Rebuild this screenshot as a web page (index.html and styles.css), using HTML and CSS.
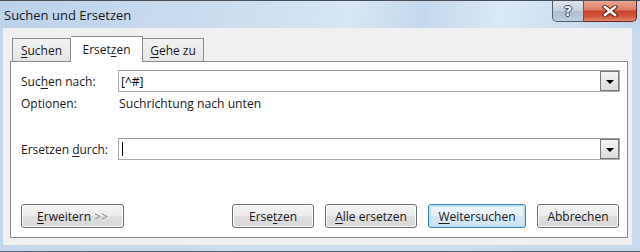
FILE: index.html
```html
<!DOCTYPE html>
<html lang="de">
<head>
    <meta charset="UTF-8">
    <meta name="viewport" content="width=device-width, initial-scale=1.0">
    <title>Suchen und Ersetzen</title>
    <link rel="stylesheet" href="styles.css">
</head>
<body>
    <div class="window">
        <div class="titlebar">
            <span class="title">Suchen und Ersetzen</span>
            <div class="caption-buttons">
                <div class="cap-btn help">?</div>
                <div class="cap-btn close">
                    <svg width="16" height="12" viewBox="0 0 16 12">
                        <path d="M3 2 L13 10 M13 2 L3 10" stroke="#5b1a10" stroke-width="4.4" stroke-linecap="square" fill="none"/>
                        <path d="M3 2 L13 10 M13 2 L3 10" stroke="#ffffff" stroke-width="2.6" stroke-linecap="square" fill="none"/>
                    </svg>
                </div>
            </div>
        </div>

        <div class="client">
            <div class="tabs">
                <div class="tab"><u>S</u>uchen</div>
                <div class="tab active">Erset<u>z</u>en</div>
                <div class="tab"><u>G</u>ehe zu</div>
            </div>

            <div class="panel">
                <div class="field-row">
                    <label class="field-label">Suc<u>h</u>en nach:</label>
                    <div class="combo">
                        <span class="combo-text">[^#]</span>
                        <span class="combo-btn"></span>
                    </div>
                </div>
                <div class="field-row options-row">
                    <span class="field-label">Optionen:</span>
                    <span class="options-value">Suchrichtung nach unten</span>
                </div>
                <div class="field-row replace-row">
                    <label class="field-label">Ersetzen <u>d</u>urch:</label>
                    <div class="combo">
                        <span class="caret"></span>
                        <span class="combo-btn"></span>
                    </div>
                </div>

                <div class="buttons">
                    <button class="btn btn-more"><u>E</u>rweitern <span class="dim">&gt;&gt;</span></button>
                    <div class="button-group">
                        <button class="btn btn-replace">Erse<u>t</u>zen</button>
                        <button class="btn btn-all"><u>A</u>lle ersetzen</button>
                        <button class="btn btn-next default"><u>W</u>eitersuchen</button>
                        <button class="btn btn-cancel">Abbrechen</button>
                    </div>
                </div>
            </div>
        </div>
    </div>
</body>
</html>
```

FILE: styles.css
```css
* {
    margin: 0;
    padding: 0;
    box-sizing: border-box;
}

body {
    font-family: 'Open Sans', 'Noto Sans', sans-serif;
    font-size: 12px;
    color: #000;
    background-color: #c7d9ec;
}

u {
    text-decoration-thickness: 1px;
    text-underline-offset: 2px;
}

.window {
    width: 640px;
    height: 252px;
    display: flex;
    flex-direction: column;
    background: linear-gradient(90deg, #c3d6eb 0%, #cfdff0 50%, #c6d9ed 100%);
    border-top: 1px solid #4a4f57;
    border-bottom: 1px solid #5a6270;
}

/* title bar */
.titlebar {
    height: 27px;
    display: flex;
    justify-content: space-between;
    background: linear-gradient(100deg, #bcd2ea 0%, #c9dbee 30%, #d8e6f4 55%, #c4d8ed 66%, #dbe8f5 78%, #c0d5eb 100%);
}

.title {
    padding: 5px 0 0 4px;
    font-size: 13px;
    color: #1a1a1a;
}

.caption-buttons {
    display: flex;
    margin-right: 3px;
    height: 21px;
}

.cap-btn {
    display: flex;
    align-items: center;
    justify-content: center;
    height: 21px;
    border: 1px solid #4f5d6f;
    border-top: none;
}

.help {
    width: 32px;
    border-radius: 0 0 0 5px;
    background: linear-gradient(#dbe4ee 0%, #c5d1df 50%, #adbdd0 51%, #c0cfdf 100%);
    font-family: 'DejaVu Sans', sans-serif;
    font-weight: bold;
    font-size: 14px;
    color: #f4f6f9;
    text-shadow: 1px 0 0 #3a4656, -1px 0 0 #3a4656, 0 1px 0 #3a4656, 0 -1px 0 #3a4656;
}

.close {
    width: 53px;
    border-left: none;
    border-color: #6d2517;
    border-radius: 0 0 5px 0;
    background: linear-gradient(#eaa796 0%, #dc7b64 45%, #c7432b 50%, #d25a3f 80%, #e48a6c 100%);
}

/* client area */
.client {
    flex: 1;
    display: flex;
    flex-direction: column;
    margin: 0 8px 6px 3px;
    padding: 8px 4px 7px 7px;
    background-color: #f0f0f0;
}

.tabs {
    display: flex;
    align-items: flex-end;
    padding-left: 2px;
    height: 25px;
    position: relative;
    z-index: 1;
}

.tab {
    height: 23px;
    padding-top: 3px;
    text-align: center;
    border: 1px solid #898c95;
    border-bottom: none;
    background: linear-gradient(#f2f2f2, #e4e4e4);
    color: #1a1a1a;
}

.tab:first-child {
    width: 59px;
}

.tab:last-child {
    width: 61px;
    border-left: none;
}

.tab.active {
    width: 72px;
    height: 26px;
    margin-bottom: -1px;
    padding-top: 4px;
    border-left: none;
    background: #fff;
}

.panel {
    flex: 1;
    display: flex;
    flex-direction: column;
    padding: 8px 7px 9px 10px;
    border: 1px solid #898c95;
    background-color: #fff;
}

.field-row {
    display: flex;
    align-items: center;
    height: 22px;
}

.field-label {
    width: 97px;
    flex-shrink: 0;
    color: #1a1a1a;
}

.options-row {
    height: 18px;
    margin-top: 2px;
}

.options-value {
    padding-left: 1px;
    font-size: 12.2px;
    color: #1a1a1a;
}

.replace-row {
    margin-top: 26px;
}

.combo {
    flex: 1;
    height: 22px;
    display: flex;
    align-items: center;
    justify-content: space-between;
    border: 1px solid #acacac;
    border-top-color: #999;
    background: #fff;
}

.combo-text {
    padding-left: 2px;
}

.caret {
    width: 1px;
    height: 14px;
    margin-left: 3px;
    background: #000;
}

.combo-btn {
    position: relative;
    width: 19px;
    height: 20px;
    border: 1px solid #7a7a7a;
    background: linear-gradient(#f4f4f4, #dcdcdc);
}

.combo-btn::after {
    content: '';
    position: absolute;
    left: 5px;
    top: 8px;
    border-left: 4px solid transparent;
    border-right: 4px solid transparent;
    border-top: 4px solid #000;
}

/* bottom buttons */
.buttons {
    margin-top: auto;
    margin-right: 1px;
    display: flex;
    justify-content: space-between;
}

.button-group {
    display: flex;
    gap: 11px;
}

.btn {
    height: 24px;
    font-family: inherit;
    font-size: 12px;
    color: #1a1a1a;
    border: 1px solid #707070;
    border-radius: 3px;
    background: linear-gradient(#f4f4f4 0%, #ececec 50%, #e0e0e0 51%, #d6d6d6 100%);
    box-shadow: inset 0 0 0 1px #fbfbfb;
}

.btn-more { width: 103px; }
.btn-replace { width: 82px; }
.btn-all { width: 92px; }
.btn-next { width: 98px; }
.btn-cancel { width: 82px; }

.btn.default {
    border-color: #3c7fb1;
    box-shadow: inset 0 0 0 2px #bfe3f6;
    background: linear-gradient(#eef6fb 0%, #e4f0f8 50%, #d6e8f4 51%, #cfe3f2 100%);
}

.dim {
    color: #8a8a8a;
}
```
